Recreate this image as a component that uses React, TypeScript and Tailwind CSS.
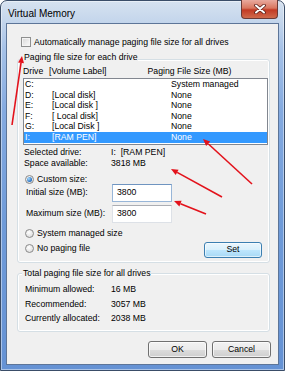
import React from "react";

function Arrow({ x1, y1, x2, y2 }: { x1: number; y1: number; x2: number; y2: number }) {
  const dx = x2 - x1;
  const dy = y2 - y1;
  const L = Math.hypot(dx, dy);
  const ux = dx / L;
  const uy = dy / L;
  const hl = 7;
  const hw = 3;
  const bx = x2 - ux * hl;
  const by = y2 - uy * hl;
  const px = -uy;
  const py = ux;
  return (
    <g>
      <line x1={x1} y1={y1} x2={bx} y2={by} stroke="#e3121b" strokeWidth={1.6} />
      <polygon
        points={`${x2},${y2} ${bx + px * hw},${by + py * hw} ${bx - px * hw},${by - py * hw}`}
        fill="#e3121b"
      />
    </g>
  );
}

function Radio({ checked }: { checked?: boolean }) {
  return (
    <span className="w-[9px] h-[9px] rounded-full border border-[#8a8a8a] bg-[radial-gradient(circle_at_40%_35%,#ffffff,#d4d4d4)] flex items-center justify-center shrink-0">
      {checked && (
        <span className="w-[5px] h-[5px] rounded-full bg-[radial-gradient(circle_at_35%_35%,#a8dcff,#1a64b8_75%)]" />
      )}
    </span>
  );
}

function Btn({ children, active }: { children: React.ReactNode; active?: boolean }) {
  return (
    <div
      className={
        active
          ? "h-full w-full rounded-[3px] border border-[#3c7fb1] bg-[linear-gradient(180deg,#eaf6fd_0%,#d9f0fc_50%,#bee6fd_51%,#a7d9f5_100%)] shadow-[inset_0_0_0_1px_rgba(255,255,255,0.6)] flex items-center justify-center"
          : "h-full w-full rounded-[3px] border border-[#707070] bg-[linear-gradient(180deg,#f2f2f2_0%,#ebebeb_50%,#dddddd_51%,#cfcfcf_100%)] shadow-[inset_0_0_0_1px_rgba(255,255,255,0.7)] flex items-center justify-center"
      }
    >
      {children}
    </div>
  );
}

const rows = [
  ["C:", "", "System managed"],
  ["D:", "[Local disk]", "None"],
  ["E:", "[Local disk ]", "None"],
  ["F:", "[ Local disk]", "None"],
  ["G:", "[Local Disk ]", "None"],
  ["I:", "[RAM PEN]", "None"],
];

export default function App() {
  return (
    <div className="relative w-[285px] h-[371px] overflow-hidden font-['Liberation_Sans',Arial,sans-serif] text-[8.7px] text-black">
      <div className="w-full h-full flex flex-col border border-[#3a4d68] rounded-t-[7px] px-[5px] pb-[5px] bg-[linear-gradient(180deg,#d6e2f0_0%,#c6d7ec_5%,#a6c2e8_13%,#84aae0_30%,#6f9bd9_60%,#6592d4_100%)] shadow-[inset_0_0_0_1px_rgba(255,255,255,0.45)]">
        {/* Title bar */}
        <div className="h-[22px] flex justify-between items-start shrink-0">
          <div className="ml-[2px] pt-[7px] text-[10px] leading-[11px] text-black">Virtual Memory</div>
          <div className="-mt-[1px] mr-[1px] w-[37px] h-[19px] rounded-b-[4px] border border-t-0 border-[#6b3a36] bg-[linear-gradient(180deg,#e9aa9e_0%,#d9765f_45%,#c23a24_55%,#cf6a4c_100%)] flex items-center justify-center">
            <svg width="12" height="10" viewBox="0 0 12 10">
              <path d="M2 1.5 L10 8.5 M10 1.5 L2 8.5" stroke="#5a1e18" strokeWidth="3.6" strokeLinecap="round" />
              <path d="M2 1.5 L10 8.5 M10 1.5 L2 8.5" stroke="#ffffff" strokeWidth="2" strokeLinecap="round" />
            </svg>
          </div>
        </div>

        {/* Content */}
        <div className="flex-1 border border-[#5d7598] bg-[#f0f0f0] flex flex-col">
          {/* Checkbox row */}
          <div className="mt-[13px] ml-[14px] h-[10px] flex items-center gap-[3px]">
            <span className="w-[10px] h-[10px] border border-[#8e8f8f] bg-[linear-gradient(135deg,#d8d8d8,#fbfbfb)] shadow-[inset_0_0_0_1px_#f4f4f4] shrink-0" />
            <span className="leading-[10px]">Automatically manage paging file size for all drives</span>
          </div>

          {/* Group 1 */}
          <div className="relative mt-[12px] ml-[10px] w-[253px] h-[204px] border border-[#d5dfe5] rounded-[3px] shadow-[inset_0_0_0_1px_#ffffff] flex flex-col">
            <div className="absolute left-[5px] top-[-8px] px-[1px] bg-[#f0f0f0] leading-[10px]">
              Paging file size for each drive
            </div>
            <div className="mt-[6px] ml-[5px] h-[10px] leading-[10px] flex">
              <span className="w-[26px]">Drive</span>
              <span className="w-[98.5px]">[Volume Label]</span>
              <span>Paging File Size (MB)</span>
            </div>
            <div className="mt-[2px] ml-[5px] w-[245px] h-[67px] border border-[#828790] bg-white flex flex-col">
              {rows.map((r, i) => (
                <div
                  key={i}
                  className={
                    i === 5
                      ? "h-[10.6px] leading-[10.6px] grid grid-cols-[27px_119px_1fr] pl-[1px] bg-[#3399ff] text-white"
                      : "h-[10.6px] leading-[10.6px] grid grid-cols-[27px_119px_1fr] pl-[1px]"
                  }
                >
                  <span>{r[0]}</span>
                  <span>{r[1]}</span>
                  <span>{r[2]}</span>
                </div>
              ))}
            </div>
            <div className="mt-[2px] ml-[6px] grid grid-cols-[87px_1fr] leading-[11px]">
              <span>Selected drive:</span>
              <span>I:&nbsp;&nbsp;[RAM PEN]</span>
              <span>Space available:</span>
              <span>3818 MB</span>
            </div>
            <div className="mt-[5px] ml-[7px] h-[10px] flex items-center gap-[3px]">
              <Radio checked />
              <span className="leading-[10px]">Custom size:</span>
            </div>
            <div className="ml-[8px] h-[18px] flex items-center">
              <span className="w-[86px]">Initial size (MB):</span>
              <div className="w-[60px] h-[18px] bg-white border border-[#98b6d8] border-t-[#6f94c0] flex items-center pl-[4px]">
                3800
              </div>
            </div>
            <div className="mt-[3px] ml-[8px] h-[18px] flex items-center">
              <span className="w-[86px]">Maximum size (MB):</span>
              <div className="w-[60px] h-[18px] bg-white border border-[#dde1e7] border-t-[#abadb3] flex items-center pl-[4px]">
                3800
              </div>
            </div>
            <div className="mt-[5px] ml-[7px] h-[10px] flex items-center gap-[3px]">
              <Radio />
              <span className="leading-[10px]">System managed size</span>
            </div>
            <div className="mt-[4px] ml-[7px] mr-[7px] flex justify-between items-start">
              <div className="mt-[1px] h-[10px] flex items-center gap-[3px]">
                <Radio />
                <span className="leading-[10px]">No paging file</span>
              </div>
              <div className="w-[58px] h-[16px]">
                <Btn active>Set</Btn>
              </div>
            </div>
          </div>

          {/* Group 2 */}
          <div className="relative mt-[10px] ml-[10px] w-[253px] h-[59px] border border-[#d5dfe5] rounded-[3px] shadow-[inset_0_0_0_1px_#ffffff]">
            <div className="absolute left-[4px] top-[-6px] px-[1px] bg-[#f0f0f0] leading-[10px]">
              Total paging file size for all drives
            </div>
            <div className="pt-[8px] ml-[7px] grid grid-cols-[86px_1fr] leading-[14.5px]">
              <span>Minimum allowed:</span>
              <span>16 MB</span>
              <span>Recommended:</span>
              <span>3057 MB</span>
              <span>Currently allocated:</span>
              <span>2038 MB</span>
            </div>
          </div>

          {/* Buttons */}
          <div className="mt-[9px] mr-[7px] flex justify-end gap-[5px]">
            <div className="w-[59px] h-[17px]">
              <Btn>OK</Btn>
            </div>
            <div className="w-[59px] h-[17px]">
              <Btn>Cancel</Btn>
            </div>
          </div>
        </div>
      </div>

      <svg className="absolute inset-0 pointer-events-none" width="285" height="371" viewBox="0 0 285 371">
        <Arrow x1={12} y1={125} x2={22} y2={56} />
        <Arrow x1={252} y1={184} x2={203} y2={139} />
        <Arrow x1={222} y1={197} x2={171} y2={169} />
        <Arrow x1={206} y1={214} x2={174} y2={201} />
      </svg>
    </div>
  );
}
